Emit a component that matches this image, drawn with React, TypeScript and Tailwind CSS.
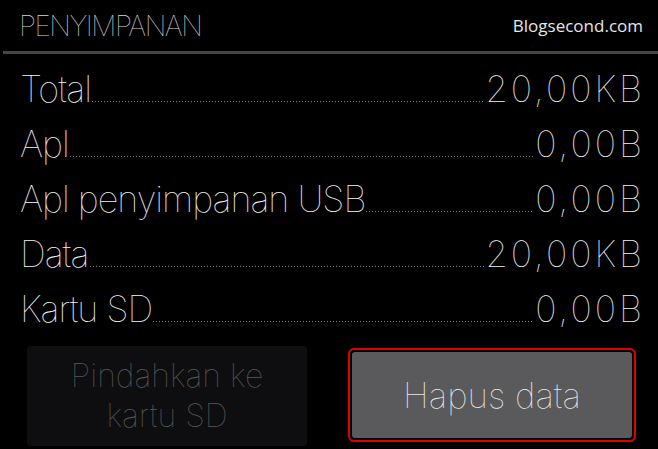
import React from 'react';

// Storage rows shown in the app info screen
const ROWS = [
  { label: 'Total', value: '20,00KB' },
  { label: 'Apl', value: '0,00B' },
  { label: 'Apl penyimpanan USB', value: '0,00B' },
  { label: 'Data', value: '20,00KB' },
  { label: 'Kartu SD', value: '0,00B' },
];

const thin = { fontFamily: 'Inter, "Noto Sans", sans-serif' };

export default function App() {
  return (
    <div className="flex h-[449px] w-[658px] flex-col overflow-hidden bg-black" style={thin}>
      {/* ---- Header ---- */}
      <header className="flex h-[51px] items-center justify-between pl-[19px] pr-[15px]">
        <h1 className="text-[28px] font-thin tracking-[-1.5px] text-[#d8d8d8]">PENYIMPANAN</h1>
        <span
          className="text-[17px] text-[#e6e6e6]"
          style={{ fontFamily: '"Open Sans", sans-serif' }}
        >
          Blogsecond.com
        </span>
      </header>
      <div className="ml-[3px] h-[3px] bg-[#454545]" />

      {/* ---- Rows ---- */}
      <div className="flex flex-col pl-[20px] pr-[16px] pt-[8px]">
        {ROWS.map((row) => (
          <div key={row.label} className="flex h-[55px] items-baseline text-[36px] font-thin leading-[55px] text-[#f2f2f2]">
            <span className="tracking-[-1px]">{row.label}</span>
            <div className="mx-[1px] h-px flex-1 bg-[repeating-linear-gradient(to_right,#7a7a7a_0_1px,transparent_1px_3px)]" />
            <span className="mr-[-3px] tracking-[3px]">{row.value}</span>
          </div>
        ))}
      </div>

      {/* ---- Buttons ---- */}
      <div className="mt-[9px] flex pl-[27px] pr-[22px]">
        <button className="flex h-[100px] w-[280px] flex-col items-center justify-center rounded-[4px] bg-[#0e0e10] text-[32px] font-thin leading-[40px] text-[#5a5a5a]">
          <span>Pindahkan ke</span>
          <span>kartu SD</span>
        </button>
        <div className="ml-[41px] mt-[2px] flex h-[94px] w-[288px] items-center justify-center rounded-[6px] border-2 border-[#e00000] p-[2px]">
          <button className="flex h-full w-full items-center justify-center rounded-[3px] bg-[#5a595c] text-[35px] font-thin text-[#e8e8e8]">
            Hapus data
          </button>
        </div>
      </div>
    </div>
  );
}
